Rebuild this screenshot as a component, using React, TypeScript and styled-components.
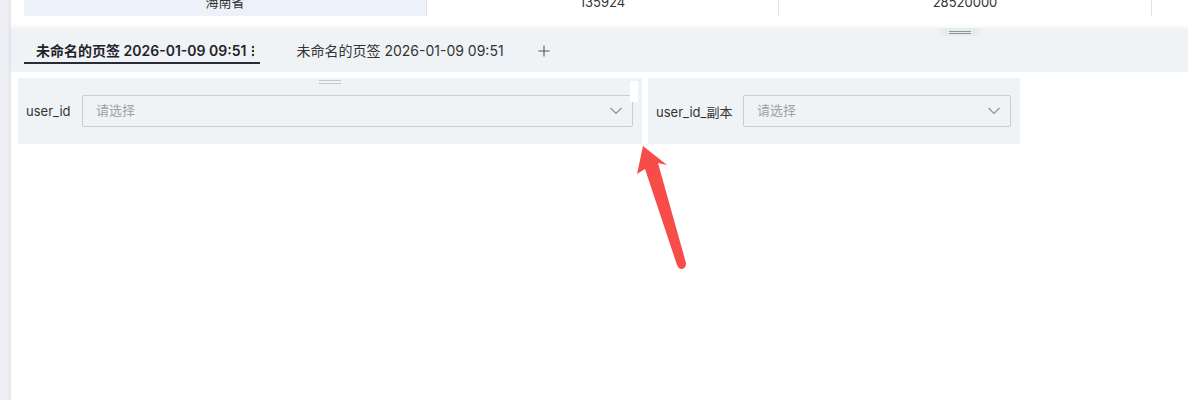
import { createGlobalStyle, styled } from 'styled-components';

const GlobalStyles = createGlobalStyle`
  html, body {
    margin: 0;
    padding: 0;
    background: #ffffff;
  }
  body {
    font-family: "Inter", "Noto Sans CJK SC", sans-serif;
    color: #333333;
  }
`;

const cells = [
  { text: '海南省', width: 403, active: true },
  { text: '135924', width: 352, active: false },
  { text: '28520000', width: 373, active: false },
];

function App() {
  return (
    <>
      <GlobalStyles />
      <Page>
        <Sidebar />
        <Main>
          <TableRow>
            {cells.map((c) => (
              <Cell key={c.text} $width={c.width} $active={c.active}>
                <CellText>{c.text}</CellText>
              </Cell>
            ))}
          </TableRow>

          <TabBar>
            <BarHandle>
              <HandleLine $color="#8d939b" $width={22} />
              <HandleLine $color="#8d939b" $width={22} />
            </BarHandle>
            <Tab $active>
              未命名的页签 2026-01-09 09:51
              <MoreIcon width="4" height="12" viewBox="0 0 4 12">
                <circle cx="2" cy="2" r="1.2" fill="#333" />
                <circle cx="2" cy="6" r="1.2" fill="#333" />
                <circle cx="2" cy="10" r="1.2" fill="#333" />
              </MoreIcon>
            </Tab>
            <Tab>未命名的页签 2026-01-09 09:51</Tab>
            <AddButton>
              <svg width="12" height="12" viewBox="0 0 12 12">
                <path d="M6 0.5V11.5M0.5 6H11.5" stroke="#555" strokeWidth="1.1" fill="none" />
              </svg>
            </AddButton>
          </TabBar>

          <Canvas>
            <FilterRow>
              <Panel $width={624}>
                <PanelHandle>
                  <HandleLine $color="#c3c8cf" $width={22} />
                  <HandleLine $color="#c3c8cf" $width={22} />
                </PanelHandle>
                <ResizeGrip />
                <Label $width={56}>user_id</Label>
                <Select>
                  <Placeholder>请选择</Placeholder>
                  <Chevron />
                </Select>
              </Panel>
              <Panel $width={372}>
                <Label $width={87}>user_id_副本</Label>
                <Select>
                  <Placeholder>请选择</Placeholder>
                  <Chevron />
                </Select>
              </Panel>
            </FilterRow>

            <Arrow width="60" height="130" viewBox="630 142 60 130">
              <path
                d="M643 146 L667 165 L658 163 L686 263 Q686 269 681 269 Q678 268 677 265 L645 169 L637 174 Z"
                fill="#f84c49"
              />
            </Arrow>
          </Canvas>
        </Main>
      </Page>
    </>
  );
}

function Chevron() {
  return (
    <ChevronSvg width="12" height="8" viewBox="0 0 12 8">
      <path d="M0.5 1 L6 6.5 L11.5 1" stroke="#8c9096" strokeWidth="1.1" fill="none" />
    </ChevronSvg>
  );
}

export const Page = styled.div`
  display: flex;
  width: 1188px;
  height: 400px;
  overflow: hidden;
`;

export const Sidebar = styled.div`
  width: 11px;
  flex-shrink: 0;
  background: linear-gradient(to right, #eff0f5 0%, #eceef3 70%, #e2e4ea 100%);
`;

export const Main = styled.div`
  flex: 1;
  display: flex;
  flex-direction: column;
  min-width: 0;
`;

export const TableRow = styled.div`
  display: flex;
  height: 16px;
  padding-left: 13px;
  margin-bottom: 12px;
`;

export const Cell = styled.div<{ $width: number; $active: boolean }>`
  width: ${(p) => p.$width}px;
  flex-shrink: 0;
  display: flex;
  justify-content: center;
  align-items: flex-start;
  overflow: hidden;
  background: ${(p) => (p.$active ? '#edf2fa' : '#ffffff')};
  border-right: 1px solid #dfe2ec;
  box-sizing: border-box;
`;

export const CellText = styled.span`
  margin-top: -8px;
  font-size: 13px;
  line-height: 20px;
  color: #333333;
`;

export const TabBar = styled.div`
  position: relative;
  height: 44px;
  box-sizing: border-box;
  padding: 12px 0 0 13px;
  display: flex;
  align-items: flex-start;
  background: #f0f3f6;
  box-shadow: 0 -2px 4px rgba(0, 0, 0, 0.04);
`;

export const BarHandle = styled.div`
  position: absolute;
  left: 929px;
  top: 0;
  width: 40px;
  height: 8px;
  background: #e6edee;
  display: flex;
  flex-direction: column;
  align-items: center;
  justify-content: center;
  gap: 1px;
`;

export const HandleLine = styled.div<{ $color: string; $width: number }>`
  width: ${(p) => p.$width}px;
  height: 1px;
  background: ${(p) => p.$color};
`;

export const Tab = styled.div<{ $active?: boolean }>`
  display: flex;
  align-items: center;
  height: 22px;
  padding: ${(p) => (p.$active ? '0 5px 0 12px' : '0 12px')};
  margin-left: ${(p) => (p.$active ? '0' : '24px')};
  font-size: 14px;
  line-height: 22px;
  font-weight: ${(p) => (p.$active ? 600 : 400)};
  color: ${(p) => (p.$active ? '#1f2329' : '#333333')};
  border-bottom: 2px solid ${(p) => (p.$active ? '#262c38' : 'transparent')};
  white-space: nowrap;
`;

export const MoreIcon = styled.svg`
  margin-left: 5px;
`;

export const AddButton = styled.div`
  display: flex;
  align-items: center;
  height: 22px;
  margin-left: 22px;
`;

export const Canvas = styled.div`
  position: relative;
  flex: 1;
  padding: 6px 0 0 7px;
  background: #ffffff;
`;

export const FilterRow = styled.div`
  display: flex;
  gap: 6px;
`;

export const Panel = styled.div<{ $width: number }>`
  position: relative;
  width: ${(p) => p.$width}px;
  height: 66px;
  box-sizing: border-box;
  padding: 0 9px 0 8px;
  display: flex;
  align-items: center;
  background: #f0f3f6;
`;

export const PanelHandle = styled.div`
  position: absolute;
  top: 2px;
  left: 50%;
  transform: translateX(-50%);
  display: flex;
  flex-direction: column;
  gap: 2px;
`;

export const ResizeGrip = styled.div`
  position: absolute;
  top: 3px;
  right: 4px;
  width: 8px;
  height: 21px;
  border-radius: 2px;
  background: #ffffff;
`;

export const Label = styled.div<{ $width: number }>`
  width: ${(p) => p.$width}px;
  flex-shrink: 0;
  font-size: 13px;
  color: #333333;
  white-space: nowrap;
`;

export const Select = styled.div`
  flex: 1;
  height: 32px;
  box-sizing: border-box;
  border: 1px solid #c9cdd4;
  border-radius: 2px;
  display: flex;
  align-items: center;
  justify-content: space-between;
  padding: 0 10px 0 13px;
`;

export const Placeholder = styled.span`
  margin-bottom: 3px;
  font-size: 13px;
  color: #9ea2a8;
`;

export const ChevronSvg = styled.svg`
  flex-shrink: 0;
`;

export const Arrow = styled.svg`
  position: absolute;
  left: 619px;
  top: 70px;
`;

export default App;
